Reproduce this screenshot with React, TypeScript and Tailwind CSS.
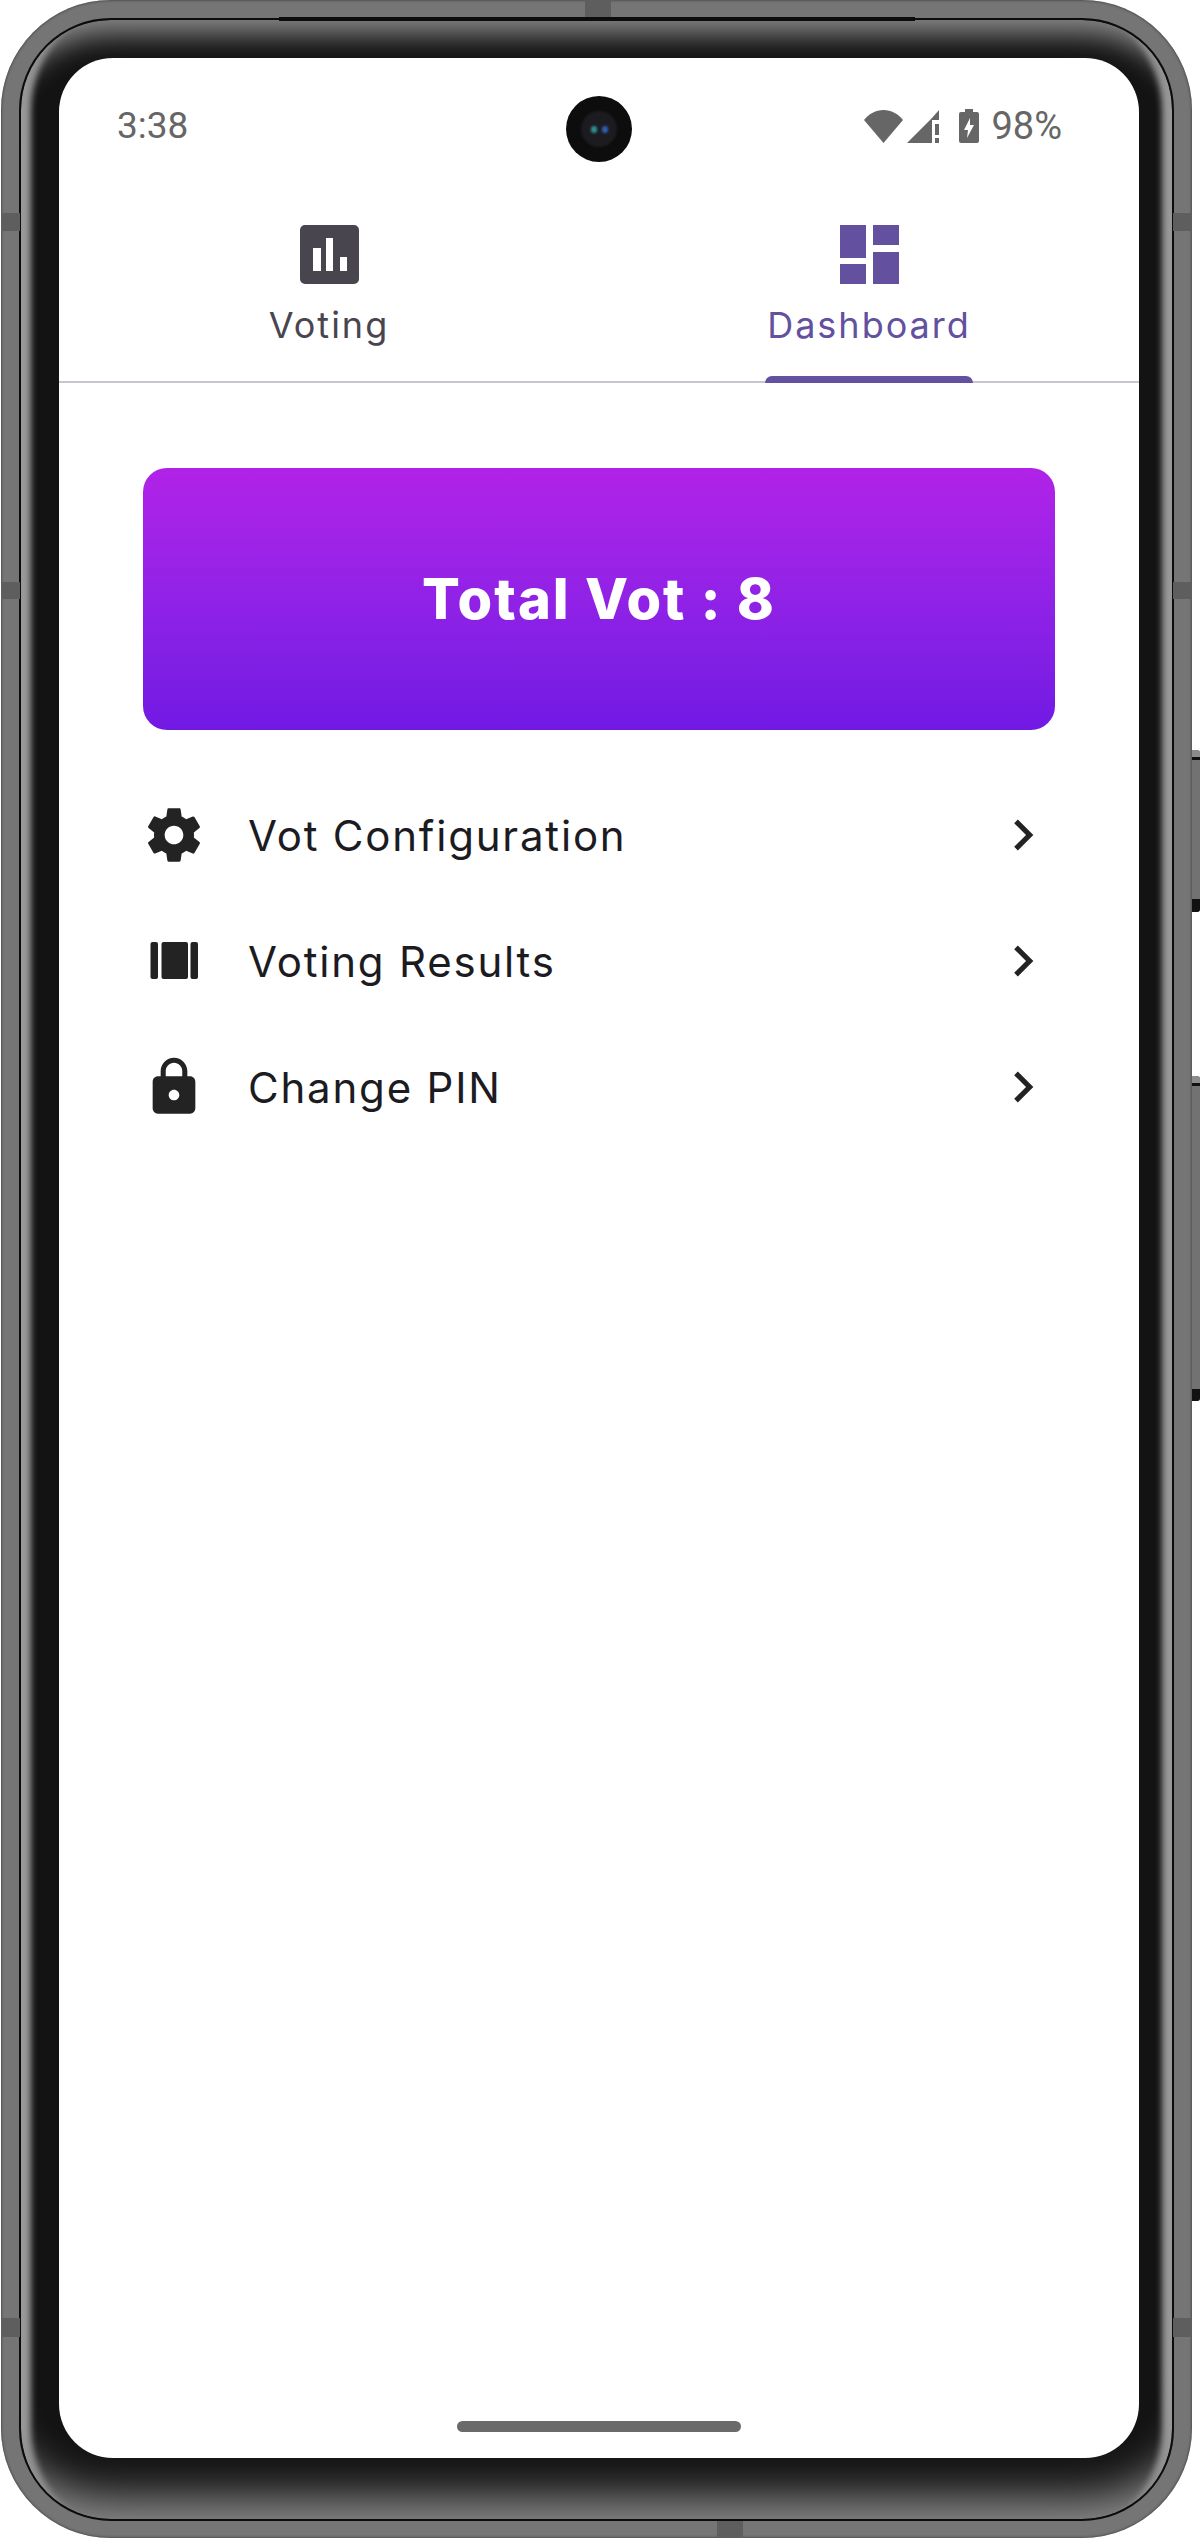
import React from 'react';

const rows = [
  { label: 'Vot Configuration', icon: 'gear' },
  { label: 'Voting Results', icon: 'carousel' },
  { label: 'Change PIN', icon: 'lock' },
];

const RowIcon = ({ name }: { name: string }) => {
  if (name === 'gear') {
    return (
      <svg viewBox="0 0 24 24" className="h-[64px] w-[64px] fill-[#232323]">
        <path d="M19.43 12.98c.04-.32.07-.64.07-.98s-.03-.66-.07-.98l2.11-1.65c.19-.15.24-.42.12-.64l-2-3.46c-.12-.22-.39-.3-.61-.22l-2.49 1c-.52-.4-1.08-.73-1.69-.98l-.38-2.65C14.46 2.18 14.25 2 14 2h-4c-.25 0-.46.18-.49.42l-.38 2.65c-.61.25-1.17.59-1.69.98l-2.49-1c-.23-.09-.49 0-.61.22l-2 3.46c-.13.22-.07.49.12.64l2.11 1.65c-.04.32-.07.65-.07.98s.03.66.07.98l-2.11 1.65c-.19.15-.24.42-.12.64l2 3.46c.12.22.39.3.61.22l2.49-1c.52.4 1.08.73 1.69.98l.38 2.65c.03.24.24.42.49.42h4c.25 0 .46-.18.49-.42l.38-2.65c.61-.25 1.17-.59 1.69-.98l2.49 1c.23.09.49 0 .61-.22l2-3.46c.12-.22.07-.49-.12-.64l-2.11-1.65zM12 15.5c-1.93 0-3.5-1.57-3.5-3.5s1.57-3.5 3.5-3.5 3.5 1.57 3.5 3.5-1.57 3.5-3.5 3.5z" />
      </svg>
    );
  }
  if (name === 'carousel') {
    return (
      <svg viewBox="0 0 64 64" className="h-[64px] w-[64px] fill-[#232323]">
        <rect x="8.5" y="13" width="7.5" height="37" rx="2" />
        <rect x="19.5" y="13" width="26.5" height="37" rx="2" />
        <rect x="48.5" y="13" width="7.5" height="37" rx="2" />
      </svg>
    );
  }
  return (
    <svg viewBox="0 0 24 24" className="h-[64px] w-[64px] fill-[#232323]">
      <path d="M18 8h-1V6c0-2.76-2.24-5-5-5S7 3.24 7 6v2H6c-1.1 0-2 .9-2 2v10c0 1.1.9 2 2 2h12c1.1 0 2-.9 2-2V10c0-1.1-.9-2-2-2zm-6 9c-1.1 0-2-.9-2-2s.9-2 2-2 2 .9 2 2-.9 2-2 2zm3.1-9H8.9V6c0-1.71 1.39-3.1 3.1-3.1 1.71 0 3.1 1.39 3.1 3.1v2z" />
    </svg>
  );
};

const SideButton = ({ className, tail }: { className: string; tail: string }) => (
  <div className={`absolute right-0 flex w-[8px] flex-col overflow-hidden rounded-r-[3px] bg-[#727272] ${className}`}>
    <div className="h-[7px] bg-[#8c8c8c]" />
    <div className="h-[3px] bg-[#111]" />
    <div className="flex-1" />
    <div className={`bg-[#111] ${tail}`} />
  </div>
);

const App: React.FC = () => {
  return (
    <div className="relative h-[2541px] w-[1200px] bg-white pb-[3px] pl-[1px] pr-[8px] font-['Inter',sans-serif]">
      <SideButton className="top-[750px] h-[162px]" tail="h-[13px]" />
      <SideButton className="top-[1076px] h-[325px]" tail="h-[12px]" />

      {/* frame */}
      <div className="relative h-full rounded-[110px] bg-[#757575] pb-[17px] pl-[18px] pr-[18px] pt-[18px] shadow-[inset_0_0_3px_#2e2e2e]">
        {/* antenna bands */}
        <div className="absolute left-[584px] top-0 h-[17px] w-[26px] bg-[#5e5e5e]" />
        <div className="absolute bottom-0 left-[716px] h-[17px] w-[26px] bg-[#5e5e5e]" />
        <div className="absolute left-0 top-[213px] h-[18px] w-[19px] bg-[#5e5e5e]" />
        <div className="absolute left-0 top-[582px] h-[17px] w-[19px] bg-[#5e5e5e]" />
        <div className="absolute left-0 top-[2318px] h-[19px] w-[19px] bg-[#5e5e5e]" />
        <div className="absolute right-0 top-[213px] h-[18px] w-[19px] bg-[#5e5e5e]" />
        <div className="absolute right-0 top-[582px] h-[17px] w-[19px] bg-[#5e5e5e]" />
        <div className="absolute right-0 top-[2318px] h-[19px] w-[19px] bg-[#5e5e5e]" />
        <div className="absolute left-[278px] top-[17px] h-[4px] w-[636px] bg-[#0c0c0c]" />

        <div className="h-full rounded-[92px] border-[2px] border-[#0c0c0c] bg-[#131313] pb-[61px] pl-[38px] pr-[33px] pt-[38px] shadow-[inset_0_44px_28px_-30px_#8a8a8a,inset_0_-62px_44px_-40px_#8a8a8a,inset_30px_0_6px_-20px_#9a9a9a,inset_-30px_0_6px_-20px_#9a9a9a]">
          {/* screen */}
          <div className="relative flex h-full flex-col rounded-[54px] bg-white">
            {/* status bar */}
            <div className="flex h-[132px] items-start justify-between pl-[58px] pr-[77px] pt-[47px]">
              <span className="font-['Roboto',sans-serif] text-[37px] leading-[42px] text-[#666]">3:38</span>
              <div className="flex items-center gap-[4px]">
                <svg viewBox="0 0 39 33" className="h-[33px] w-[39px] fill-[#666]">
                  <path d="M19.5 33 0 10C5 3.8 11.8 0 19.5 0S34 3.8 39 10z" />
                </svg>
                <svg viewBox="0 0 32 33" className="h-[33px] w-[32px] fill-[#666]">
                  <path d="M0 33 25 8v25zM28 14h4v11h-4zM28 28h4v5h-4z" />
                  <path d="M25 8 32 0v10h-7z" />
                </svg>
                <svg viewBox="0 0 20 34" className="ml-[16px] h-[34px] w-[20px] fill-[#666]">
                  <path fillRule="evenodd" d="M6 0h8v3h4a2 2 0 0 1 2 2v27a2 2 0 0 1-2 2H2a2 2 0 0 1-2-2V5a2 2 0 0 1 2-2h4zm5 9-6 12h4l-1 8 7-13h-4z" />
                </svg>
                <span className="ml-[8px] font-['Roboto',sans-serif] text-[38px] leading-[42px] text-[#666]">98%</span>
              </div>
            </div>

            {/* tabs */}
            <div className="relative flex h-[193px] border-b-[2px] border-[#cac4d0]">
              <div className="flex flex-1 flex-col items-center pt-[35px] text-[#49454f]">
                <svg viewBox="0 0 59 59" className="h-[59px] w-[59px]">
                  <path className="fill-[#49454f]" fillRule="evenodd" d="M5 0h49a5 5 0 0 1 5 5v49a5 5 0 0 1-5 5H5a5 5 0 0 1-5-5V5a5 5 0 0 1 5-5zM13 23v23h8V23zM26 13v33h7V13zM40 32v14h7V32z" />
                </svg>
                <span className="mt-[19px] text-[36px] leading-[44px] tracking-[2px]">Voting</span>
              </div>
              <div className="flex flex-1 flex-col items-center pt-[35px] text-[#63509e]">
                <svg viewBox="0 0 59 59" className="h-[59px] w-[59px] fill-[#63509e]">
                  <path d="M0 0h26v33H0zM33 0h26v20H33zM33 27h26v32H33zM0 39h26v20H0z" />
                </svg>
                <span className="mt-[19px] text-[36px] leading-[44px] tracking-[2px]">Dashboard</span>
              </div>
              <div className="absolute bottom-[-2px] right-[166px] h-[7px] w-[208px] rounded-t-[9px] bg-[#63509e]" />
            </div>

            {/* content */}
            <div className="flex flex-1 flex-col px-[84px] pt-[85px]">
              <div className="flex h-[262px] items-center justify-center rounded-[24px] bg-gradient-to-b from-[#b122e8] to-[#7119e4]">
                <span className="text-[56px] font-extrabold tracking-[2px] text-white">Total Vot : 8</span>
              </div>
              <div className="mt-[42px] flex flex-col">
                {rows.map((row) => (
                  <div key={row.label} className="flex h-[126px] items-center">
                    <div className="-ml-[1px] flex w-[106px] items-center">
                      <RowIcon name={row.icon} />
                    </div>
                    <span className="flex-1 text-[42px] tracking-[1.8px] text-[#1c1b1f]">{row.label}</span>
                    <svg viewBox="0 0 24 24" className="mr-[1px] h-[62px] w-[62px] fill-[#232323]">
                      <path d="M10 6 8.59 7.41 13.17 12l-4.58 4.59L10 18l6-6z" />
                    </svg>
                  </div>
                ))}
              </div>
            </div>

            {/* home bar */}
            <div className="mx-auto mb-[26px] h-[11px] w-[284px] rounded-full bg-[#6a6a6a]" />

            {/* camera */}
            <div className="absolute left-[507px] top-[38px] flex h-[66px] w-[66px] items-center justify-center rounded-full bg-[#0d0d0d]">
              <div className="flex h-[36px] w-[36px] items-center justify-center gap-[5px] rounded-full bg-[#1c1c20] blur-[1px]">
                <div className="h-[7px] w-[6px] rounded-full bg-[#2f8f95]" />
                <div className="h-[7px] w-[6px] rounded-full bg-[#2f5fb5]" />
              </div>
            </div>
          </div>
        </div>
      </div>
    </div>
  );
};

export default App;
